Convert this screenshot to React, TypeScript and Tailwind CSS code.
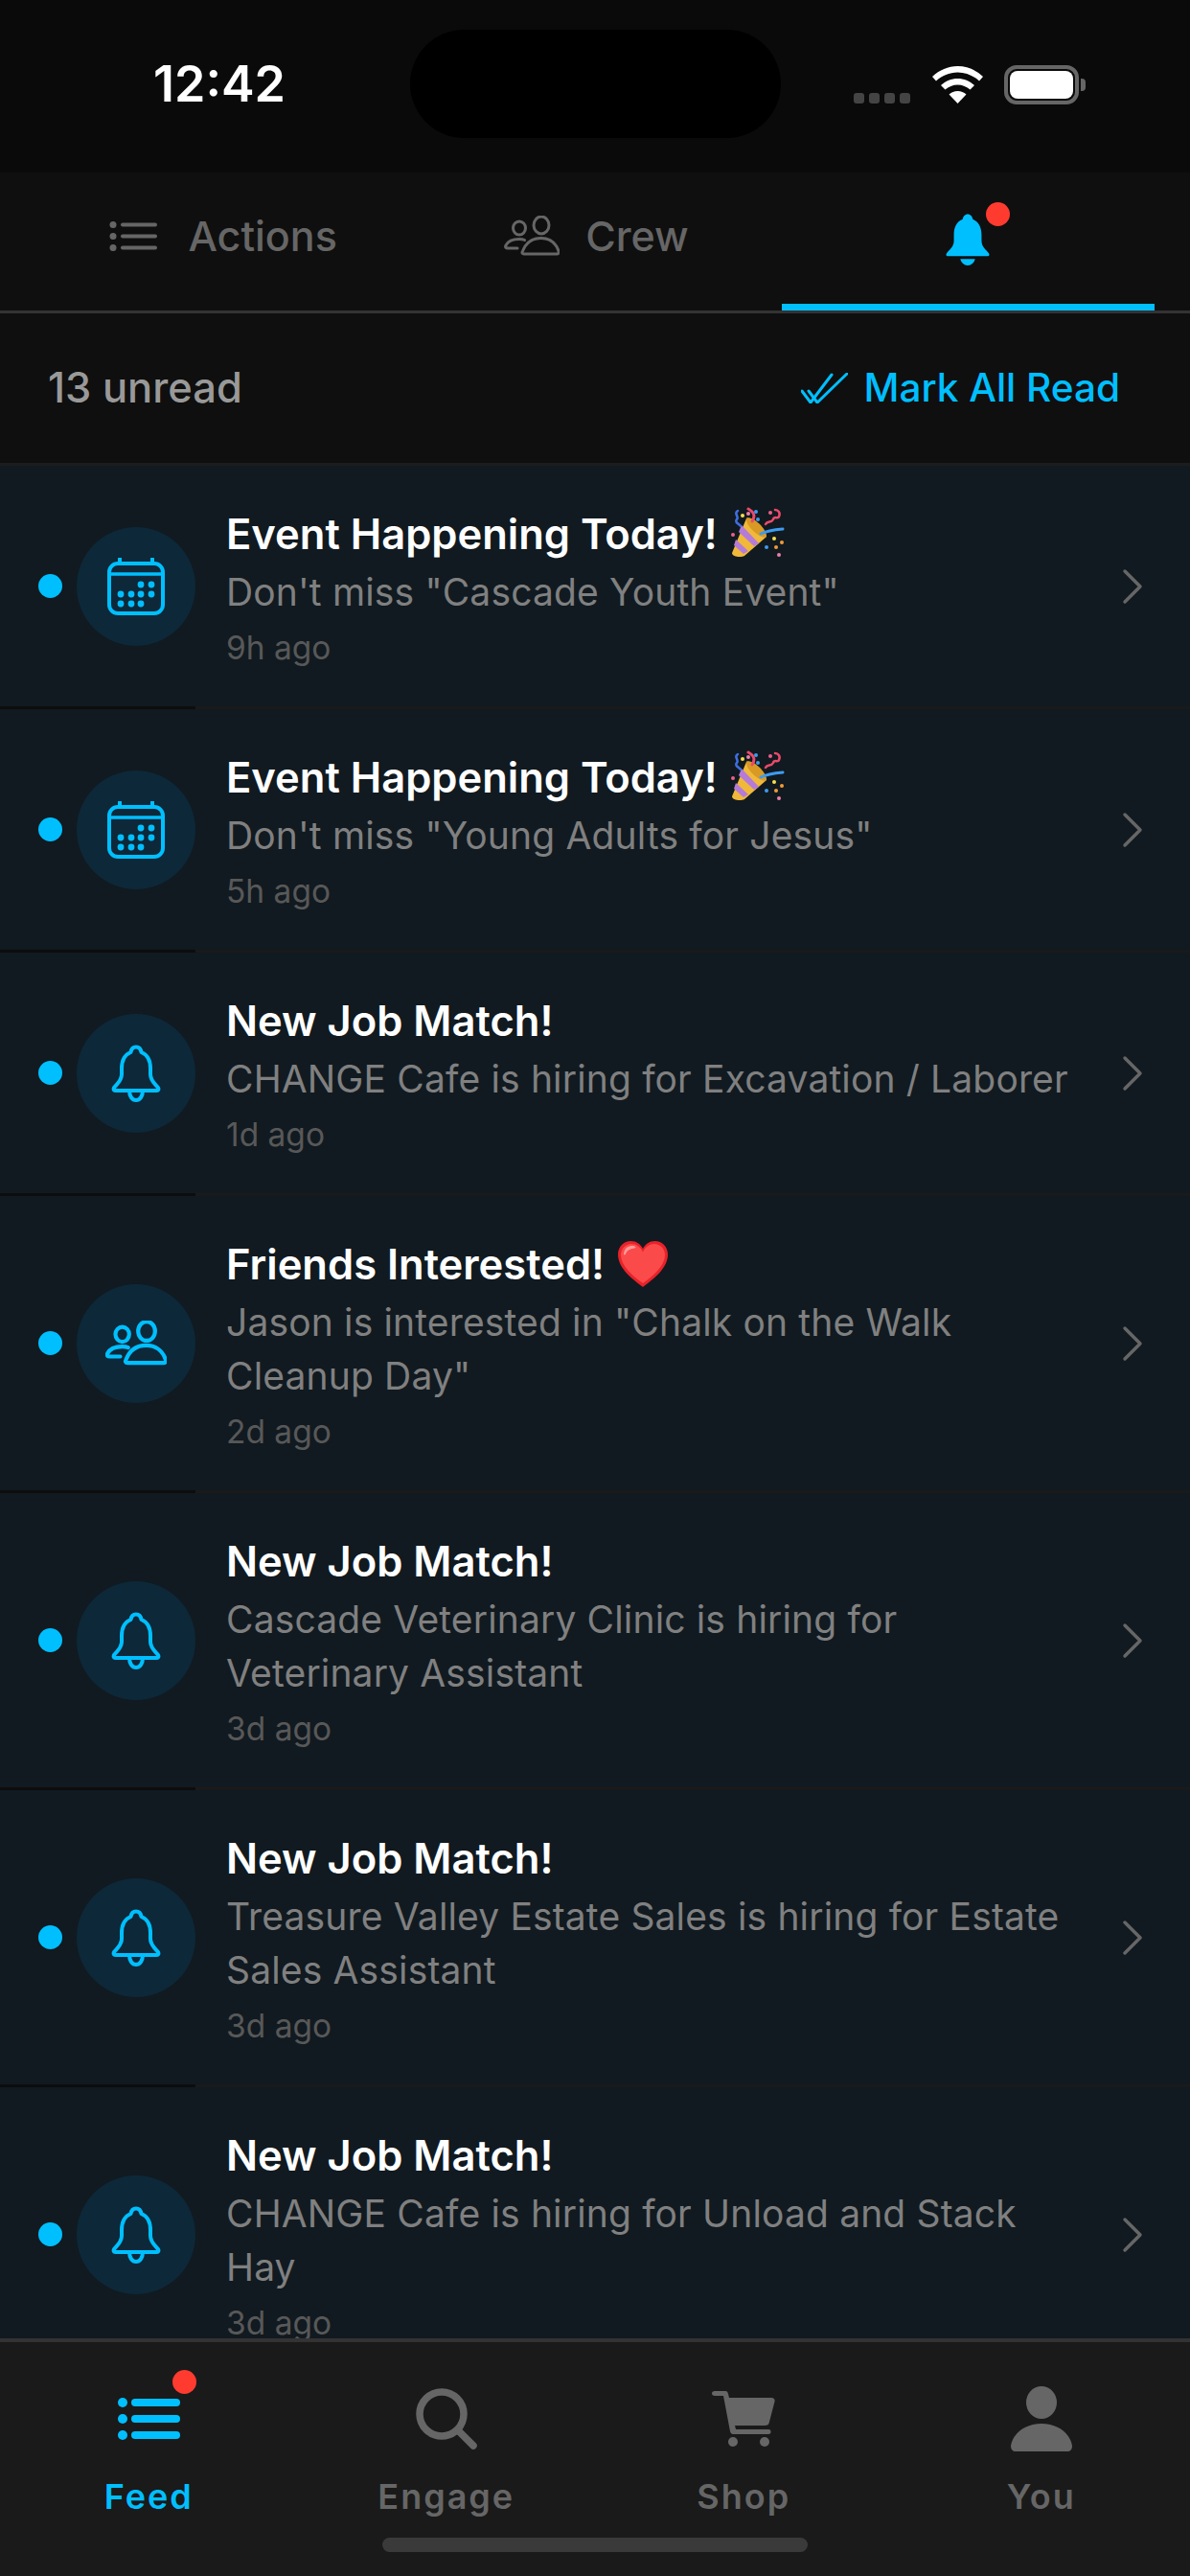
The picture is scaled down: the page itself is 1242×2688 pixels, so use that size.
import React from 'react';
import { ChevronRight } from 'lucide-react';

type Kind = 'calendar' | 'bell' | 'people';

interface Notice {
  kind: Kind;
  title: string;
  emoji?: 'party' | 'heart';
  body: string;
  time: string;
}

const notices: Notice[] = [
  { kind: 'calendar', title: 'Event Happening Today!', emoji: 'party', body: 'Don\'t miss "Cascade Youth Event"', time: '9h ago' },
  { kind: 'calendar', title: 'Event Happening Today!', emoji: 'party', body: 'Don\'t miss "Young Adults for Jesus"', time: '5h ago' },
  { kind: 'bell', title: 'New Job Match!', body: 'CHANGE Cafe is hiring for Excavation / Laborer', time: '1d ago' },
  { kind: 'people', title: 'Friends Interested!', emoji: 'heart', body: 'Jason is interested in "Chalk on the Walk Cleanup Day"', time: '2d ago' },
  { kind: 'bell', title: 'New Job Match!', body: 'Cascade Veterinary Clinic is hiring for Veterinary Assistant', time: '3d ago' },
  { kind: 'bell', title: 'New Job Match!', body: 'Treasure Valley Estate Sales is hiring for Estate Sales Assistant', time: '3d ago' },
  { kind: 'bell', title: 'New Job Match!', body: 'CHANGE Cafe is hiring for Unload and Stack Hay', time: '3d ago' },
];

const BELL = 'M26 2.5C23 2.5 21 5 20.5 8C13 11 11 18 11 25V31C11 38 6 41 3 45C2 47 3 48 5 48H47C49 48 50 47 49 45C46 41 41 38 41 31V25C41 18 39 11 31.5 8C31 5 29 2.5 26 2.5Z';

const CalendarIcon = () => (
  <svg width="60" height="60" viewBox="0 0 60 60" fill="none" stroke="#00bfff">
    <rect x="2" y="6" width="56" height="52" rx="9" strokeWidth="4" />
    <path d="M2 17H58" strokeWidth="3.5" />
    <path d="M13 1V6M47 1V6" strokeWidth="4" strokeLinecap="round" />
    <g fill="#00bfff" stroke="none">
      {[[35, 28], [46, 28], [14, 38], [25, 38], [35, 38], [46, 38], [14, 48], [25, 48], [35, 48]].map(([cx, cy]) => (
        <circle key={`${cx}-${cy}`} cx={cx} cy={cy} r="3.4" />
      ))}
    </g>
  </svg>
);

const BellIcon = () => (
  <svg width="52" height="60" viewBox="0 0 52 60" fill="none" stroke="#00bfff" strokeWidth="4" strokeLinejoin="round">
    <path d={BELL} />
    <path d="M19 48C19 54 22 58 26 58C30 58 33 54 33 48" />
  </svg>
);

const PeopleIcon = ({ color, width, stroke }: { color: string; width: number; stroke: number }) => (
  <svg width={width} viewBox="0 0 58 42" fill="none" stroke={color} strokeWidth={stroke} strokeLinejoin="round" strokeLinecap="round">
    <ellipse cx="16" cy="13" rx="6.5" ry="7" />
    <ellipse cx="39" cy="10" rx="8" ry="9" />
    <path d="M21 40C19 40 18.5 38.5 19.5 37C23 28 30 23.5 38.5 23.5C47 23.5 54 28 57 37C57.5 38.5 57 40 55 40Z" />
    <path d="M14 34H4C2 34 1 33 2 31C4 27 9 24.5 16 24.5C18 24.5 20 24.8 21.5 25.5" />
  </svg>
);

const PartyEmoji = () => (
  <svg width="56" height="56" viewBox="0 0 56 56" fill="none" className="shrink-0">
    <path d="M14 51C10 53 1 52 1 48L16 12C20 9 36 22 37 31Z" fill="#f0b93a" />
    <path d="M16 12C20 8 37 21 37 31C33 35 15 21 16 12Z" fill="#d99a25" />
    <path d="M11 19L29 38L24 41L8 26Z" fill="#b57bd8" />
    <path d="M5 34L18 46L13 49L3 40Z" fill="#b57bd8" />
    <path d="M31 28C37 25 43 24 54 23" stroke="#3d9bf0" strokeWidth="3" strokeLinecap="round" />
    <path d="M22 15C25 10 25 6 18 2" stroke="#ea4a6c" strokeWidth="3" strokeLinecap="round" />
    <path d="M36 18C38 14 42 17 44 13C45 9 49 13 50 10C52 6 49 3 46 3" stroke="#ea4a6c" strokeWidth="2.5" strokeLinecap="round" />
    <path d="M7 4C2 7 9 10 6 13C3 16 9 18 10 20" stroke="#3d6fe0" strokeWidth="2.5" strokeLinecap="round" />
    <circle cx="12" cy="9" r="2" fill="#f7e04a" />
    <circle cx="18" cy="7" r="2" fill="#ee7fa8" />
    <circle cx="26" cy="5" r="2" fill="#3d9bf0" />
    <circle cx="28" cy="13" r="2" fill="#3d9bf0" />
    <circle cx="41" cy="6" r="2" fill="#ee5f8a" />
    <circle cx="2" cy="29" r="2" fill="#ee5f8a" />
    <circle cx="45" cy="33" r="2" fill="#f7e04a" />
    <circle cx="53" cy="37" r="2" fill="#f09a3a" />
    <circle cx="47" cy="42" r="2" fill="#f09a3a" />
    <circle cx="37" cy="42" r="2" fill="#3d9bf0" />
    <circle cx="50" cy="50" r="2" fill="#ee7fa8" />
  </svg>
);

const HeartEmoji = () => (
  <svg width="52" height="48" viewBox="0 0 52 48" className="shrink-0">
    <path d="M26 48C14 39 0 28 0 14C0 6 6 0 13.5 0C19 0 23.5 3 26 8C28.5 3 33 0 38.5 0C46 0 52 6 52 14C52 28 38 39 26 48Z" fill="#e8222a" />
    <path d="M26 44C15 36 3 26 3 14.5C3 8 8 3 14 3C19 3 23.5 6 26 11.5C28.5 6 33 3 38 3C44 3 49 8 49 14.5C49 26 37 36 26 44Z" fill="#fb4a4a" />
    <path d="M6 13C7 7 11 5 15 5C18 5 20 7 17 7.5C12 8 9 10 8 13.5C7.5 15 6 15 6 13Z" fill="#ff9a9a" />
  </svg>
);

const NoticeRow = ({ notice }: { notice: Notice }) => (
  <div className="relative flex items-center pl-[40px] pr-[52px] py-[26px] border-b-[3px] border-[#1a1a1a]">
    {/* the divider is darker under the icon column */}
    <div className="absolute left-0 bottom-[-3px] w-[204px] h-[3px] bg-[#0d0d0d]" />
    <div className="w-[25px] h-[25px] rounded-full bg-[#00bfff] shrink-0" />
    <div className="w-[124px] h-[124px] ml-[15px] rounded-full bg-[#0d2839] flex items-center justify-center shrink-0">
      {notice.kind === 'calendar' && <CalendarIcon />}
      {notice.kind === 'bell' && <BellIcon />}
      {notice.kind === 'people' && <PeopleIcon color="#00bfff" width={64} stroke={3.8} />}
    </div>
    <div className="flex-1 ml-[32px] pr-[14px] pt-[24px] pb-[13px]">
      <div className="flex items-center gap-[14px] h-[42px] text-[43.5px] leading-[42px] font-semibold text-white">
        <span>{notice.title}</span>
        {notice.emoji === 'party' && <PartyEmoji />}
        {notice.emoji === 'heart' && <HeartEmoji />}
      </div>
      <p className="mt-[12px] text-[39px] leading-[56px] tracking-[0.15px] text-[#808080]">{notice.body}</p>
      <p className="mt-[8px] text-[33.5px] leading-[44px] text-[#585858]">{notice.time}</p>
    </div>
    <ChevronRight className="w-[64px] h-[64px] text-[#666666] shrink-0 -mr-[24px]" strokeWidth={1.3} />
  </div>
);

const NavItem = ({ label, active, children }: { label: string; active?: boolean; children: React.ReactNode }) => (
  <div className="flex flex-col items-center">
    <div className="h-[72px] flex items-center justify-center">{children}</div>
    <span className={`mt-[23px] text-[36px] leading-[44px] font-semibold tracking-[2px] ${active ? 'text-[#00bfff]' : 'text-[#666666]'}`}>
      {label}
    </span>
  </div>
);

export default function App() {
  return (
    <div className="w-[1242px] h-[2688px] flex flex-col overflow-hidden bg-[#111a20] font-['Inter',sans-serif]">
      {/* status bar */}
      <div className="h-[180px] shrink-0 bg-[#0a0a0a] relative flex items-start">
        <span className="ml-[160px] mt-[60px] text-[52px] leading-[56px] font-semibold text-white">12:42</span>
        <div className="absolute left-[428px] top-[31px] w-[387px] h-[113px] rounded-[57px] bg-black" />
        <div className="absolute left-[891px] top-[97px] flex gap-[5px]">
          {[0, 1, 2, 3].map((i) => (
            <div key={i} className="w-[11px] h-[11px] rounded-[3px] bg-[#444444]" />
          ))}
        </div>
        <svg className="absolute left-[973px] top-[69px]" width="53" height="39" viewBox="0 0 53 39" fill="white">
          <path d="M26.5 0C16.5 0 7.5 4 0 11L4 15.5C10 10 18 6.5 26.5 6.5C35 6.5 43 10 49 15.5L53 11C45.5 4 36.5 0 26.5 0Z" />
          <path d="M26.5 13C20 13 14 15.5 9 20L13.5 24.5C17 21.5 21.5 19.5 26.5 19.5C31.5 19.5 36 21.5 39.5 24.5L44 20C39 15.5 33 13 26.5 13Z" />
          <path d="M26.5 26C23 26 20 27.2 17.5 29.5L26.5 39L35.5 29.5C33 27.2 30 26 26.5 26Z" />
        </svg>
        <div className="absolute left-[1048px] top-[68px] w-[78px] h-[41px] rounded-[13px] border-[4px] border-[#666666] p-[2px]">
          <div className="w-full h-full rounded-[8px] bg-white" />
        </div>
        <div className="absolute left-[1128px] top-[82px] w-[5px] h-[13px] rounded-r-[4px] bg-[#666666]" />
      </div>

      {/* tabs */}
      <div className="h-[147px] shrink-0 bg-[#0f0f0f] border-b-[3px] border-[#333333] px-[37px] grid grid-cols-3">
        <div className="flex items-center justify-center gap-[32px] pl-[3px] pb-[12px] text-[#666666] text-[43px] font-medium">
          <svg width="50" height="31" viewBox="0 0 50 31" fill="#666666">
            {[3.5, 15.5, 27.5].map((cy) => (
              <React.Fragment key={cy}>
                <circle cx="4" cy={cy} r="3.5" />
                <rect x="12" y={cy - 2} width="38" height="4" rx="2" />
              </React.Fragment>
            ))}
          </svg>
          <span>Actions</span>
        </div>
        <div className="flex items-center justify-center gap-[27px] pl-[3px] pb-[12px] text-[#666666] text-[43px] font-medium">
          <PeopleIcon color="#666666" width={58} stroke={3} />
          <span>Crew</span>
        </div>
        <div className="relative flex items-center justify-center pb-[5px]">
          <div className="relative">
            <svg width="50" height="58" viewBox="0 0 52 60" fill="#00bfff" className="block">
              <path d={BELL} />
              <path d="M18 51H34C33 55 30 58 26 58C22 58 19 55 18 51Z" />
            </svg>
            <div className="absolute left-[44px] -top-[10px] w-[25px] h-[25px] rounded-full bg-[#ff3b30]" />
          </div>
          <div className="absolute left-0 right-0 bottom-0 h-[7px] bg-[#00bfff]" />
        </div>
      </div>

      {/* unread header */}
      <div className="h-[159px] shrink-0 bg-[#0f0f0f] border-b-[3px] border-[#1c1c1c] pl-[50px] pr-[73px] flex items-center justify-between">
        <span className="text-[43.5px] font-medium text-[#999999]">13 unread</span>
        <div className="flex items-center gap-[16px] text-[40.5px] font-medium text-[#00bfff]">
          <svg width="49" height="32" viewBox="0 0 49 32" fill="none" stroke="#00bfff" strokeWidth="3" strokeLinecap="round" strokeLinejoin="round">
            <path d="M1 19L10 31L32 2" />
            <path d="M8 19L17 31L48 1" />
          </svg>
          <span>Mark All Read</span>
        </div>
      </div>

      {/* list */}
      <div className="flex-1 min-h-0 overflow-hidden">
        {notices.map((notice, i) => (
          <NoticeRow key={i} notice={notice} />
        ))}
      </div>

      {/* bottom nav */}
      <div className="h-[248px] shrink-0 bg-[#1a1a1a] border-t-[4px] border-[#333333] relative">
        <div className="grid grid-cols-4 pt-[44px]">
          <NavItem label="Feed" active>
            <div className="relative">
              <svg width="65" height="44" viewBox="0 0 65 44" fill="#00bfff" className="block">
                {[5, 22, 39].map((cy) => (
                  <React.Fragment key={cy}>
                    <circle cx="5" cy={cy} r="5" />
                    <rect x="14" y={cy - 4} width="51" height="8" rx="4" />
                  </React.Fragment>
                ))}
              </svg>
              <div className="absolute left-[57px] -top-[29px] w-[25px] h-[25px] rounded-full bg-[#ff3b30]" />
            </div>
          </NavItem>
          <NavItem label="Engage">
            <svg width="64" height="64" viewBox="0 0 64 64" fill="none" stroke="#666666" strokeWidth="7.5" strokeLinecap="round">
              <circle cx="27" cy="27" r="23" />
              <path d="M44 44L60 60" />
            </svg>
          </NavItem>
          <NavItem label="Shop">
            <svg width="66" height="58" viewBox="0 0 66 58" fill="#666666">
              <path d="M3 0H14C16 0 16.5 1 17 3L18 7H62C65 7 66 9 65.5 11L60 32C59.5 35 58 36 55 36H24L25 40H59C61 40 61.5 41 61.5 42.5C61.5 44 61 45 59 45H22C20.5 45 19.5 44 19 42L12 5H3C1 5 0 4 0 2.5C0 1 1 0 3 0Z" />
              <circle cx="22" cy="53" r="5" />
              <circle cx="55" cy="53" r="5" />
            </svg>
          </NavItem>
          <NavItem label="You">
            <svg width="64" height="68" viewBox="0 0 64 68" fill="#666666">
              <ellipse cx="32" cy="17" rx="16" ry="17" />
              <path d="M32 39C14 39 2 50 0 62C0 66 2 68 5 68H59C62 68 64 66 64 62C62 50 50 39 32 39Z" />
            </svg>
          </NavItem>
        </div>
        <div className="absolute left-[399px] top-[204px] w-[444px] h-[15px] rounded-full bg-[#3a3a3a]" />
      </div>
    </div>
  );
}
